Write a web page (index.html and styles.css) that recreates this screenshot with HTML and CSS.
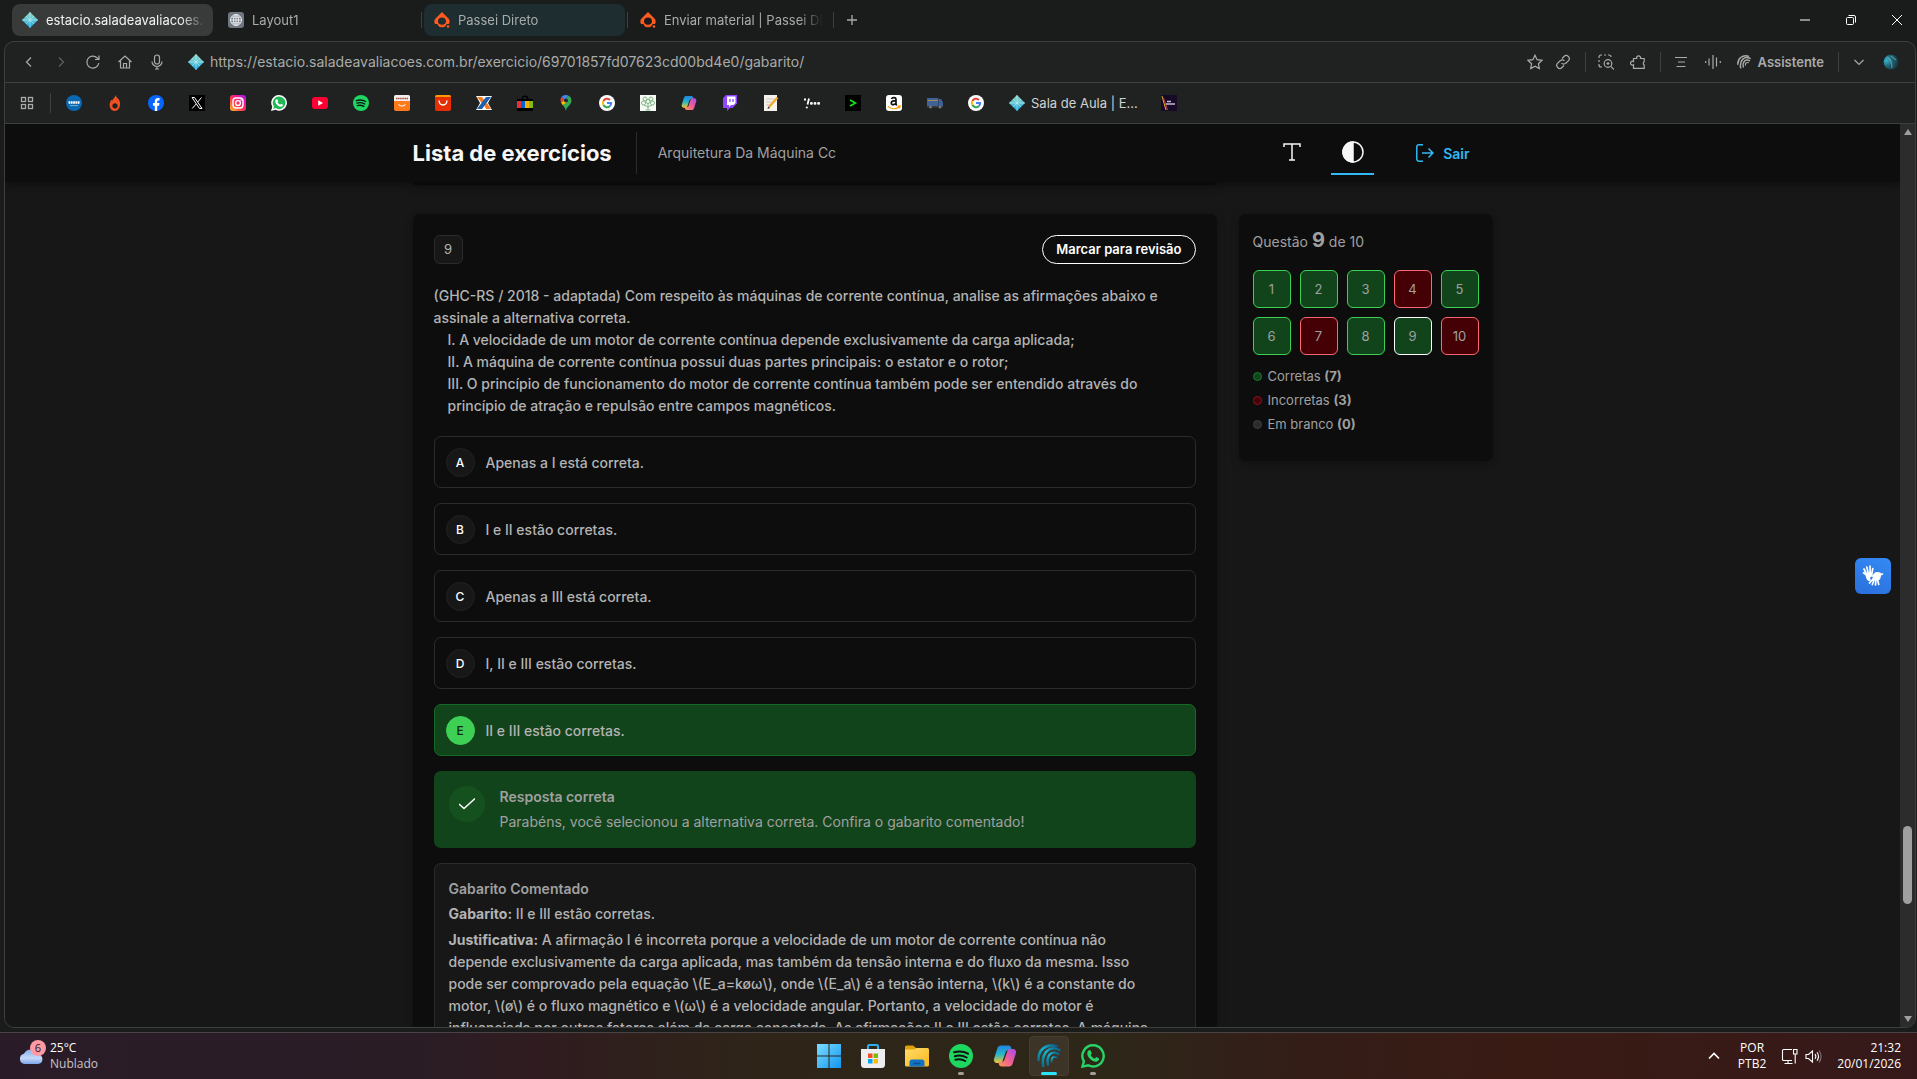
FILE: index.html
```html
<!DOCTYPE html>
<html lang="pt-BR">
<head>
    <meta charset="UTF-8">
    <meta name="viewport" content="width=device-width, initial-scale=1.0">
    <title>Lista de exercícios</title>
    <link rel="stylesheet" href="styles.css">
</head>
<body>
    <!-- Shared icons -->
    <svg class="sprite" aria-hidden="true">
        <defs>
            <linearGradient id="gem" x1="0" y1="0" x2="0" y2="1"><stop offset="0" stop-color="#8fd3c8"/><stop offset=".5" stop-color="#5cc3d0"/><stop offset="1" stop-color="#12a5e8"/></linearGradient>
            <linearGradient id="insta" x1="0" y1="1" x2="1" y2="0"><stop offset="0" stop-color="#ffc328"/><stop offset=".4" stop-color="#ff3d4d"/><stop offset=".7" stop-color="#f0179b"/><stop offset="1" stop-color="#8a1fff"/></linearGradient>
            <linearGradient id="cop1" x1="0" y1="0" x2="0" y2="1"><stop offset="0" stop-color="#2383e2"/><stop offset=".5" stop-color="#25b6c9"/><stop offset="1" stop-color="#f5c52c"/></linearGradient>
            <linearGradient id="cop2" x1="0" y1="1" x2="1" y2="0"><stop offset="0" stop-color="#a34bea"/><stop offset=".5" stop-color="#ef5c9b"/><stop offset="1" stop-color="#fb9a4b"/></linearGradient>
            <linearGradient id="win" x1="0" y1="0" x2="1" y2="1"><stop offset="0" stop-color="#7bdcff"/><stop offset="1" stop-color="#1296f0"/></linearGradient>
            <linearGradient id="wave" x1="1" y1="0" x2="0" y2="1"><stop offset="0" stop-color="#0d5a80"/><stop offset=".5" stop-color="#16b3cf"/><stop offset="1" stop-color="#0e6f8c"/></linearGradient>
            <linearGradient id="cloud" x1="0" y1="0" x2="0" y2="1"><stop offset="0" stop-color="#86aef0"/><stop offset=".6" stop-color="#c6dafa"/><stop offset="1" stop-color="#7ba5ec"/></linearGradient>
            <linearGradient id="folder" x1="0" y1="0" x2="1" y2="1"><stop offset="0" stop-color="#ffdb6b"/><stop offset="1" stop-color="#fbb81c"/></linearGradient>
            <radialGradient id="orb" cx=".2" cy=".4" r=".9"><stop offset="0" stop-color="#39b4cf"/><stop offset=".45" stop-color="#1f5f70"/><stop offset="1" stop-color="#123039"/></radialGradient>
        </defs>
        <symbol id="i-gem" viewBox="0 0 16 16">
            <path fill="url(#gem)" d="M8 0l8 8-8 8-8-8z"/>
            <path d="M8 0v16M0 8h16M4 4l8 8M12 4l-8 8" stroke="#dff8ff" stroke-width=".6" opacity=".8"/>
        </symbol>
        <symbol id="i-passei" viewBox="0 0 16 16">
            <path fill="#ff5a1f" fill-rule="evenodd" d="M8 0l6.500 6.500c1.500 1.700 1.500 3.500.5 5.500h-3.600l-1 1.800H5.600l-1-1.800H1C0 10 0 8.200 1.500 6.500zM8 5.600a4 4 0 0 0-4 3.900c0 2 1.800 3.300 4 3.300s4-1.300 4-3.300a4 4 0 0 0-4-3.900z"/>
            <path d="M4 12.200c1.500 3 6.500 3 8 0" fill="none" stroke="#ff5a1f" stroke-width="1.600"/>
            <circle cx="14" cy="14.500" r="1.300" fill="#ff5a1f"/>
        </symbol>
        <symbol id="i-google" viewBox="0 0 16 16">
            <circle cx="8" cy="8" r="8" fill="#fff"/>
            <g fill="none" stroke-width="2">
                <path stroke="#ea4335" d="M4.400 5.900A4.200 4.200 0 0 1 11 5"/>
                <path stroke="#fbbc05" d="M4.400 10.100a4.200 4.200 0 0 1 0-4.200"/>
                <path stroke="#34a853" d="M10.800 11.200a4.200 4.200 0 0 1-6.400-1.100"/>
                <path stroke="#4285f4" d="M8 8.100h4.200a4.200 4.200 0 0 1-1.400 3.100"/>
            </g>
        </symbol>
        <symbol id="i-spotify" viewBox="0 0 24 24">
            <circle cx="12" cy="12" r="12" fill="#1ed760"/>
            <path d="M5 8.300c5-1.400 10-.9 14 1.400M5.800 12.200c4.200-1.200 8.400-.7 11.900 1.300M6.400 15.800c3.600-.9 6.900-.5 9.900 1.200" fill="none" stroke="#121212" stroke-width="2" stroke-linecap="round"/>
        </symbol>
        <symbol id="i-copilot" viewBox="0 0 24 24">
            <path id="cop-half" fill="url(#cop1)" d="M8 1.500h7.500c1.400 0 2.200.9 2.600 2.200l.7 2.300h-3.300c-1.600 0-2.500.9-3 2.400l-2.700 8c-.5 1.500-1.400 2.600-2.800 2.600H4.200C1.800 19 .4 17 1.100 14.700l3.300-10.500C5 2.400 6.200 1.500 8 1.500z"/>
            <path fill="url(#cop2)" transform="rotate(180 12 12)" d="M8 1.500h7.500c1.400 0 2.200.9 2.600 2.200l.7 2.300h-3.300c-1.600 0-2.500.9-3 2.400l-2.700 8c-.5 1.500-1.400 2.600-2.800 2.600H4.200C1.800 19 .4 17 1.100 14.700l3.300-10.500C5 2.400 6.200 1.500 8 1.500z"/>
        </symbol>
        <symbol id="i-arcs" viewBox="0 0 24 24">
            <g fill="none" stroke-linecap="round">
                <path stroke-width="2.600" d="M19.500 2C9-.5 1 6 1.500 16"/>
                <path stroke-width="2.600" d="M22.500 5.800C13 1 4 8.500 6.200 22"/>
                <path stroke-width="2.400" d="M21.500 9.800C15 6 9 11 10.800 20.500"/>
                <path stroke-width="2" d="M19.500 13.300c-3.500-1.500-5.500 1-5 4.200"/>
            </g>
        </symbol>
    </svg>

    <header class="tab-strip">
        <div class="tabs">
            <button class="tab tab-active" type="button">
                <svg class="icon-16"><use href="#i-gem"/></svg>
                <span class="tab-title">estacio.saladeavaliacoes.com.br</span>
            </button>
            <button class="tab" type="button">
                <svg class="icon-16" viewBox="0 0 16 16"><rect width="16" height="16" rx="3" fill="#6f7780"/><g fill="none" stroke="#e9edf0" stroke-width="1"><circle cx="8" cy="8" r="5.500"/><ellipse cx="8" cy="8" rx="2.500" ry="5.500"/><path d="M8 2.500v11M2.500 8h11M3.500 5.200h9M3.500 10.800h9"/></g></svg>
                <span class="tab-title">Layout1</span>
            </button>
            <button class="tab tab-tinted" type="button">
                <svg class="icon-16"><use href="#i-passei"/></svg>
                <span class="tab-title">Passei Direto</span>
            </button>
            <button class="tab tab-last" type="button">
                <svg class="icon-16"><use href="#i-passei"/></svg>
                <span class="tab-title">Enviar material | Passei Direto</span>
            </button>
            <button class="new-tab" type="button" aria-label="Nova guia">
                <svg class="icon-16" viewBox="0 0 16 16"><path d="M8 3v10M3 8h10" stroke="#a9abaa" stroke-width="1.300"/></svg>
            </button>
        </div>
        <div class="window-controls">
            <button type="button" aria-label="Minimizar"><svg viewBox="0 0 10 10"><path d="M0 5h10"/></svg></button>
            <button type="button" aria-label="Restaurar"><svg viewBox="0 0 10 10"><rect x=".5" y="2.500" width="7" height="7" rx="1"/><path d="M2.500.5H8A1.500 1.500 0 0 1 9.500 2v5.500"/></svg></button>
            <button type="button" aria-label="Fechar"><svg viewBox="0 0 10 10"><path d="M0 0l10 10M10 0L0 10"/></svg></button>
        </div>
    </header>

    <div class="window">
        <div class="address-bar">
            <nav class="nav-buttons">
                <button type="button" aria-label="Voltar"><svg viewBox="0 0 16 16"><path d="M10 3.500L5.500 8l4.500 4.500"/></svg></button>
                <button class="is-off" type="button" aria-label="Avançar"><svg viewBox="0 0 16 16"><path d="M6 3.500L10.500 8 6 12.500"/></svg></button>
                <button type="button" aria-label="Recarregar"><svg viewBox="0 0 16 16"><path d="M13.800 9A6 6 0 1 1 12 3.800L14 5.500M14 1.500v4h-4"/></svg></button>
                <button type="button" aria-label="Início"><svg viewBox="0 0 16 16"><path d="M1.500 8L8 2l6.500 6M3.500 6.500V14h9V6.500M6.500 14V9.500h3V14"/></svg></button>
                <button type="button" aria-label="Voz"><svg viewBox="0 0 16 16"><rect x="5.500" y="1" width="5" height="9" rx="2.500"/><path d="M3 7.500a5 5 0 0 0 10 0M8 12.500V15M6 15h4"/></svg></button>
            </nav>
            <svg class="icon-16 site-icon"><use href="#i-gem"/></svg>
            <input class="url" type="text" aria-label="Endereço" value="https://estacio.saladeavaliacoes.com.br/exercicio/69701857fd07623cd00bd4e0/gabarito/">
            <div class="tools">
                <button type="button" aria-label="Favoritar"><svg viewBox="0 0 16 16"><path d="M8 1.200l2.100 4.500 4.900.6-3.600 3.400.9 4.900L8 12.200l-4.300 2.400.9-4.900L1 6.300l4.900-.6z"/></svg></button>
                <button type="button" aria-label="Copiar link"><svg viewBox="0 0 16 16"><path d="M7 4.500l2-2a3 3 0 0 1 4.300 4.300l-2.500 2.400a3 3 0 0 1-4.300 0M9 11.500l-2 2a3 3 0 0 1-4.300-4.300l2.500-2.400a3 3 0 0 1 4.300 0"/></svg></button>
            </div>
            <div class="tools tools-wide">
                <button type="button" aria-label="Busca visual"><svg viewBox="0 0 16 16"><path d="M1 4V3a2 2 0 0 1 2-2h1M6 1h2M10 1h1a2 2 0 0 1 2 2M1 6v2M1 10v1a2 2 0 0 0 2 2h1"/><circle cx="10" cy="9.500" r="3.800"/><path d="M12.800 12.300L16 15.500M10 8v3M8.500 9.500h3"/></svg></button>
                <button type="button" aria-label="Extensões"><svg viewBox="0 0 16 16"><path d="M3.500 14.300V10.800a1.900 1.900 0 1 1 0-3.200V4.500h3.200a2 2 0 1 1 3.800 0h3.700v3.200a2 2 0 0 0 0 3.400v3.200z"/></svg></button>
            </div>
            <div class="tools tools-wide">
                <button type="button" aria-label="Leitura"><svg viewBox="0 0 16 16"><path d="M2 3.500h12M5 8h7M3.500 12.500h9"/></svg></button>
                <button type="button" aria-label="Ouvir"><svg viewBox="0 0 16 16"><path d="M.7 7v2M4 4.500v7M8 1v14M11.500 3.500v9M15.300 7v2"/></svg></button>
                <button class="assistant" type="button"><svg viewBox="0 0 24 24"><use href="#i-arcs"/></svg>Assistente</button>
            </div>
            <div class="tools tools-wide">
                <button type="button" aria-label="Mais"><svg viewBox="0 0 16 16"><path d="M3.500 6L8 10.500 12.500 6"/></svg></button>
                <button type="button" aria-label="Perfil"><svg viewBox="0 0 16 16"><circle cx="8" cy="8" r="7.500" fill="url(#orb)" stroke="none"/><path d="M4 3c4 2 5 5 5 11M8 2l5 4" stroke="#8ec9d5" opacity=".5"/></svg></button>
            </div>
        </div>

        <nav class="bookmarks">
            <button class="apps" type="button" aria-label="Aplicativos"><svg class="icon-16" viewBox="0 0 16 16"><g fill="none" stroke="#a9abaa" stroke-width="1.300"><rect x="2.500" y="2.500" width="4" height="4"/><rect x="9.500" y="2.500" width="4" height="4"/><rect x="2.500" y="9.500" width="4" height="4"/><rect x="9.500" y="9.500" width="4" height="4"/></g></svg></button>
            <a href="#" aria-label="SENAI"><svg viewBox="0 0 16 16"><circle cx="8" cy="8" r="8" fill="#0a67b1"/><path d="M2.500 7.500h11" stroke="#fff" stroke-width="2.400" stroke-dasharray="1.800 .5"/><path d="M4 10.600h8" stroke="#8fc1e6" stroke-width=".8"/></svg></a>
            <a href="#" aria-label="Hotmart"><svg viewBox="0 0 16 16"><path fill="#f04e23" fill-rule="evenodd" d="M8.500 0c.3 2 3 3.200 4 5.700 1.800 4.600-.5 10.300-4.700 10.300S1.500 11 3.200 7l1-2.200 1 1C5.600 4 8 3 8.500 0zM8 8.200a2.600 2.600 0 1 0 0 5.200 2.600 2.600 0 0 0 0-5.200z"/></svg></a>
            <a href="#" aria-label="Facebook"><svg viewBox="0 0 16 16"><circle cx="8" cy="8" r="8" fill="#0866ff"/><path fill="#fff" d="M6.800 16v-5.300H5V8h1.800V6.700C6.800 4.300 8 3 10.200 3l1.300.1v2.300h-1c-1 0-1.300.5-1.300 1.300V8h2.300l-.4 2.700H9.200V16z"/></svg></a>
            <a href="#" aria-label="X"><svg viewBox="0 0 16 16"><path d="M0 0h16v16H0z"/><path fill="none" stroke="#fff" d="M3 2.500h2.500l7.500 11h-2.500zM12.500 2.500L8.700 7M7.200 9l-4 4.500"/></svg></a>
            <a href="#" aria-label="Instagram"><svg viewBox="0 0 16 16"><rect width="16" height="16" rx="3" fill="url(#insta)"/><g fill="none" stroke="#fff" stroke-width="1.400"><rect x="3" y="3" width="10" height="10" rx="3"/><circle cx="8" cy="8" r="2.400"/></g><circle cx="11" cy="5" r=".8" fill="#fff"/></svg></a>
            <a href="#" aria-label="WhatsApp"><svg viewBox="0 0 16 16"><path fill="#fff" d="M8.200 0A7.800 7.800 0 1 1 4.500 14.700L0 16l1.300-4.300A7.800 7.800 0 0 1 8.200 0z"/><path fill="#1fb855" d="M8.200 1.500a6.300 6.300 0 1 1-3.500 11.600L2.200 14l.8-2.500A6.300 6.300 0 0 1 8.200 1.500z"/><path fill="#fff" d="M5.300 4.300l1-.1.900 2-.7 1c.6 1.200 1.500 2 2.700 2.500l.9-1 1.900 1c0 1.300-1 2-2.100 2C7 11.500 4.300 8.500 4.300 6.200c0-.9.400-1.500 1-1.900z"/></svg></a>
            <a href="#" aria-label="YouTube"><svg viewBox="0 0 16 16"><rect y="2" width="16" height="12" rx="3" fill="#ff0033"/><path fill="#fff" d="M6.200 5.300L11 8l-4.800 2.700z"/></svg></a>
            <a href="#" aria-label="Spotify"><svg><use href="#i-spotify"/></svg></a>
            <a href="#" aria-label="Ofertas"><svg viewBox="0 0 16 16"><rect width="16" height="16" rx="2" fill="#ff7a1a"/><path fill="#f4efec" d="M2 0h12a2 2 0 0 1 2 2v4H0V2a2 2 0 0 1 2-2z"/><path d="M2 3.500h12" stroke="#a04a3c" stroke-width="1.600" stroke-dasharray="1.500 .6"/><path d="M4.500 9.500c1.500 2 5.500 2 7 0" fill="none" stroke="#fff" stroke-width="1.200"/></svg></a>
            <a href="#" aria-label="AliExpress"><svg viewBox="0 0 16 16"><rect width="16" height="16" rx="2" fill="#e62e04"/><path fill="#ff9a00" d="M2 0h12a2 2 0 0 1 2 2H0a2 2 0 0 1 2-2z"/><path d="M4 5.500c.5 6 7.500 6 8 0" fill="none" stroke="#fff" stroke-width="1.400"/></svg></a>
            <a href="#" aria-label="Exatas"><svg viewBox="0 0 16 16"><path fill="#fff" d="M0 1h16l-4 7 4 7H0l4-7z"/><path fill="#f47b20" d="M1 2h5l3 4-2.500 3zM8 10l3-2 4 6h-5z"/><path fill="#1d5fa8" d="M10 2h5L6 14H1z"/></svg></a>
            <a href="#" aria-label="Loja"><svg viewBox="0 0 16 16"><path d="M5 5c0-5 6-5 6 0" fill="none" stroke="#000" stroke-width="1.400"/><path d="M0 4h16v12H0z"/><path fill="#e53238" d="M0 6h4v7H0z"/><path fill="#0064d2" d="M4 6h4v7H4z"/><path fill="#f5af02" d="M8 6h4v7H8z"/><path fill="#86b817" d="M12 6h4v7h-4z"/></svg></a>
            <a href="#" aria-label="Maps"><svg viewBox="0 0 16 16"><path fill="#34a853" d="M8 16c0-4 5.500-6 5.500-10.500C13.500 3 12 1 10 .4L4 9c1.500 2.500 3.500 4 4 7z"/><path fill="#4285f4" d="M10 .4C7 -.6 4.500.500 3.500 2L7 5z"/><path fill="#ea4335" d="M3.500 2C2.300 3.600 2.300 5.500 3 7.500L7 5z"/><path fill="#fbbc05" d="M3 7.500L4.500 10 9.500 7 7 5z"/><circle cx="8" cy="5.500" r="2" fill="#1c2a3a"/></svg></a>
            <a href="#" aria-label="Google"><svg><use href="#i-google"/></svg></a>
            <a href="#" aria-label="Árvore"><svg viewBox="0 0 16 16"><path fill="#f6faf5" d="M0 0h16v16H0z"/><g fill="none" stroke="#7fb683"><circle cx="5" cy="4" r="2"/><circle cx="11" cy="4" r="2"/><circle cx="3.500" cy="8" r="2"/><circle cx="8" cy="6.500" r="2"/><circle cx="12.500" cy="8" r="2"/><path d="M8 8v7M8 12L4 10M8 12l4-2M5.500 15h5"/></g></svg></a>
            <a href="#" aria-label="Copilot"><svg><use href="#i-copilot"/></svg></a>
            <a href="#" aria-label="Twitch"><svg viewBox="0 0 16 16"><path fill="#9146ff" d="M4 0L1 3v10h4v3l3-3h2.500L15 8.500V0z"/><path fill="#fff" d="M5 1.500h8.500V8l-2 2H9l-2 2v-2H5z"/><path d="M8 4v3M11 4v3" stroke="#9146ff" stroke-width="1.300"/></svg></a>
            <a href="#" aria-label="Notas"><svg viewBox="0 0 16 16"><path fill="#f4f2ea" d="M1 0h13v16H1z"/><path d="M3 4h8M3 7h6M3 10h4" stroke="#c9c7bf"/><path d="M14.500 2.500L6 12" stroke="#f0a830" stroke-width="2.400"/><path fill="#333" d="M4.500 14l.6-2.600 1.900 1.700z"/></svg></a>
            <a href="#" aria-label="Código"><svg viewBox="0 0 16 16"><path d="M0 4.500h2M5 3.500L3.500 9.500" fill="none" stroke="#fff" stroke-width="1.800"/><g fill="#f4f4f4"><circle cx="2.800" cy="12.500" r="1.100"/><rect x="6" y="7" width="2.800" height="2.800" rx="1"/><rect x="9.600" y="7" width="2.800" height="2.800" rx="1"/><rect x="13.200" y="7" width="2.800" height="2.800" rx="1"/></g></svg></a>
            <a href="#" aria-label="Terminal"><svg viewBox="0 0 16 16"><path d="M0 0h16v16H0z"/><path d="M5 5l5.500 3L5 11" fill="none" stroke="#12e312" stroke-width="1.600"/></svg></a>
            <a href="#" aria-label="Amazon"><svg viewBox="0 0 16 16"><rect width="16" height="16" rx="3" fill="#fff"/><path d="M5.500 4c.7-2 4.500-2 4.500.5V9c0 .6.300 1 .8 1.400M10 5.700C7 5.700 5.300 6.300 5.300 8c0 2.400 3.800 2.200 4.700-.3" fill="none" stroke="#111" stroke-width="1.700"/><path d="M2 11.500c3.500 2.700 8 2.700 11 .6M11.500 11.200l2.500-.2-.6 2.400" fill="none" stroke="#ff9900" stroke-width="1.300"/></svg></a>
            <a href="#" aria-label="Caminhão"><svg viewBox="0 0 16 16"><path fill="#3f6298" d="M0 3h11.500v8H0zM12 4h2l2 3.500V11h-4z"/><path fill="#3a3a3e" d="M0 11h16v1.500H0z"/><path d="M1 5.500h10" stroke="#a58a58"/><circle cx="3.500" cy="12" r="1.500" fill="#73737a"/><circle cx="13" cy="12" r="1.500" fill="#73737a"/></svg></a>
            <a href="#" aria-label="Google"><svg><use href="#i-google"/></svg></a>
            <a class="bookmark-wide" href="#"><svg><use href="#i-gem"/></svg>Sala de Aula | E...</a>
            <a href="#" aria-label="Prisma"><svg viewBox="0 0 16 16"><path fill="#170a26" d="M0 0h16v16H0z"/><path d="M1 1l4 14" stroke="#e5b32c"/><path d="M2.500 3l4 12" stroke="#d03a4a"/><path d="M6 6.500h4M5 9h9" stroke="#c8b8d8" stroke-width="1.300"/></svg></a>
        </nav>

        <div class="viewport">
            <div class="page">
                <header class="page-header">
                    <div class="container header-row">
                        <h1>Lista de exercícios</h1>
                        <p class="subject">Arquitetura Da Máquina Cc</p>
                        <div class="header-actions">
                            <button type="button" aria-label="Tamanho do texto"><svg viewBox="0 0 20 20"><path d="M2 5V2h16v3M10 2v16M7 18h6"/></svg></button>
                            <button class="is-on" type="button" aria-label="Contraste"><svg viewBox="0 0 22 22"><circle cx="11" cy="11" r="10"/><path class="half" d="M11 1a10 10 0 0 0 0 20z"/></svg></button>
                            <a class="exit" href="#"><svg viewBox="0 0 18 18"><path d="M7 .8H3A2.200 2.200 0 0 0 .8 3v12A2.200 2.200 0 0 0 3 17.200h4M6 9h11M12.500 4.500L17 9l-4.500 4.500"/></svg>Sair</a>
                        </div>
                    </div>
                </header>

                <div class="container layout">
                    <main class="questions">
                        <section class="card card-previous"></section>
                        <section class="card question">
                            <div class="question-top">
                                <span class="badge">9</span>
                                <button class="review" type="button">Marcar para revisão</button>
                            </div>
                            <div class="statement">
                                <p>(GHC-RS / 2018 - adaptada) Com respeito às máquinas de corrente contínua, analise as afirmações abaixo e assinale a alternativa correta.</p>
                                <p class="indent">I. A velocidade de um motor de corrente contínua depende exclusivamente da carga aplicada;</p>
                                <p class="indent">II. A máquina de corrente contínua possui duas partes principais: o estator e o rotor;</p>
                                <p class="indent">III. O princípio de funcionamento do motor de corrente contínua também pode ser entendido através do princípio de atração e repulsão entre campos magnéticos.</p>
                            </div>
                            <div class="options">
                                <label class="option"><input type="radio" name="q9"><span class="letter">A</span>Apenas a I está correta.</label>
                                <label class="option"><input type="radio" name="q9"><span class="letter">B</span>I e II estão corretas.</label>
                                <label class="option"><input type="radio" name="q9"><span class="letter">C</span>Apenas a III está correta.</label>
                                <label class="option"><input type="radio" name="q9"><span class="letter">D</span>I, II e III estão corretas.</label>
                                <label class="option option-correct"><input type="radio" name="q9" checked><span class="letter">E</span>II e III estão corretas.</label>
                            </div>
                            <div class="feedback">
                                <span class="feedback-icon"><svg viewBox="0 0 16 16"><path d="M0 8l5 4.500L16 2.500"/></svg></span>
                                <div>
                                    <h2>Resposta correta</h2>
                                    <p>Parabéns, você selecionou a alternativa correta. Confira o gabarito comentado!</p>
                                </div>
                            </div>
                            <div class="answer-key">
                                <h2>Gabarito Comentado</h2>
                                <p><strong>Gabarito:</strong> II e III estão corretas.</p>
                                <p><strong>Justificativa:</strong> A afirmação I é incorreta porque a velocidade de um motor de corrente contínua não depende exclusivamente da carga aplicada, mas também da tensão interna e do fluxo da mesma. Isso pode ser comprovado pela equação \(E_a=køω\), onde \(E_a\) é a tensão interna, \(k\) é a constante do motor, \(ø\) é o fluxo magnético e \(ω\) é a velocidade angular. Portanto, a velocidade do motor é influenciada por outros fatores além da carga conectada. As afirmações II e III estão corretas. A máquina</p>
                            </div>
                        </section>
                    </main>

                    <aside class="card summary">
                        <p class="progress">Questão <strong>9</strong> de 10</p>
                        <div class="numbers">
                            <button class="hit" type="button">1</button>
                            <button class="hit" type="button">2</button>
                            <button class="hit" type="button">3</button>
                            <button class="miss" type="button">4</button>
                            <button class="hit" type="button">5</button>
                            <button class="hit" type="button">6</button>
                            <button class="miss" type="button">7</button>
                            <button class="hit" type="button">8</button>
                            <button class="hit current" type="button">9</button>
                            <button class="miss" type="button">10</button>
                        </div>
                        <ul class="legend">
                            <li class="legend-hit">Corretas <strong>(7)</strong></li>
                            <li class="legend-miss">Incorretas <strong>(3)</strong></li>
                            <li>Em branco <strong>(0)</strong></li>
                        </ul>
                    </aside>
                </div>

                <button class="sign-widget" type="button" aria-label="Libras">
                    <svg viewBox="0 0 22 22"><g fill="none" stroke="#fff" stroke-linecap="round"><path stroke-width="1.700" d="M4.500 9L2 4M6.200 8L4.800 2.200M8.200 8L8 1.200M9.800 9l1-5.500M4.500 10L1.500 7.800M14 14l-.5 6M12.500 14l-2.200 5.500M15.500 14l1.200 5.500M11.500 13.500L7.500 18M17 10l3.500-1"/></g><path fill="#fff" d="M3.500 8.500l4-1.500 3 1.500-.8 2.500L8 13l1 2.500-1.800.6C4.500 15.500 3.500 12 3.500 8.500zM9 11.500l4-4c2.500-1 6-.5 6.500 2l-1.500 5-3.500 1-4.500-1 1-2.500z"/></svg>
                </button>
            </div>
            <div class="scrollbar" aria-hidden="true">
                <svg viewBox="0 0 10 8"><path d="M5 1l4 6H1z"/></svg>
                <div class="track"><div class="thumb"></div></div>
                <svg viewBox="0 0 10 8"><path d="M5 7l4-6H1z"/></svg>
            </div>
        </div>
    </div>

    <footer class="taskbar">
        <button class="weather" type="button">
            <span class="weather-icon">
                <svg viewBox="0 0 24 16"><path fill="url(#cloud)" d="M5.500 16a5.200 5.200 0 0 1-.6-10.200A8 8 0 0 1 19.500 6.500 4.800 4.800 0 0 1 19 16z"/></svg>
                <span class="weather-badge">6</span>
            </span>
            <span class="weather-text">25°C<small>Nublado</small></span>
        </button>
        <div class="dock">
            <button type="button" aria-label="Iniciar"><svg viewBox="0 0 24 24"><path fill="url(#win)" d="M0 0h11.500v11.500H0zM12.500 0H24v11.500H12.500zM0 12.500h11.500V24H0zM12.500 12.500H24V24H12.500z"/></svg></button>
            <button type="button" aria-label="Microsoft Store"><svg viewBox="0 0 24 24"><path d="M7 6V2.200Q7 1 8.200 1h7.600Q17 1 17 2.200V6" fill="none" stroke="#2cb0f0" stroke-width="2"/><path fill="#eeeef0" d="M0 5h24v15.500a3.500 3.500 0 0 1-3.500 3.500h-17A3.500 3.500 0 0 1 0 20.500z"/><path fill="#f25022" d="M7 9.500h4.500V14H7z"/><path fill="#7fba00" d="M12.500 9.500H17V14h-4.500z"/><path fill="#00a4ef" d="M7 15h4.500v4.500H7z"/><path fill="#ffb900" d="M12.500 15H17v4.500h-4.500z"/></svg></button>
            <button type="button" aria-label="Explorador"><svg viewBox="0 0 24 24"><path fill="#e0a008" d="M0 3q0-1.500 1.500-1.500H8L11 4v3H0z"/><path fill="url(#folder)" d="M0 5.500h9L11.500 4H22.500Q24 4 24 5.500V21q0 1.500-1.500 1.500h-21Q0 22.500 0 21z"/><path fill="#1273c4" d="M4.500 18q0-2.500 2.500-2.500h10q2.500 0 2.500 2.500v4.500h-15z"/><path d="M8.500 19.500h7" stroke="#0b4f8c" stroke-width="1.500"/></svg></button>
            <button class="running" type="button" aria-label="Spotify"><svg><use href="#i-spotify"/></svg></button>
            <button type="button" aria-label="Copilot"><svg><use href="#i-copilot"/></svg></button>
            <button class="running focused" type="button" aria-label="Navegador"><svg class="arcs"><use href="#i-arcs"/></svg></button>
            <button class="running" type="button" aria-label="WhatsApp"><svg viewBox="0 0 24 24"><path fill="none" stroke="#25d366" stroke-width="2.400" d="M12.200 1.300a10.600 10.600 0 1 1-5 20L1.500 22.600l1.400-5.300A10.600 10.600 0 0 1 12.200 1.300z"/><path fill="#25d366" d="M7.800 6.300l1.700-.1 1.300 3.200-1.100 1.500c.9 1.800 2.300 3 4 3.800l1.500-1.600 3 1.500c0 2-1.600 3.100-3.300 3.100-4.500-.3-8.600-4.800-8.600-8.300 0-1.400.6-2.400 1.500-3.100z"/></svg></button>
        </div>
        <div class="tray">
            <button type="button" aria-label="Ícones ocultos"><svg viewBox="0 0 12 12"><path d="M1 8.500l5-5 5 5"/></svg></button>
            <button class="tray-lang" type="button">POR<br>PTB2</button>
            <button class="tray-status" type="button" aria-label="Rede e volume">
                <svg viewBox="0 0 17 17"><path d="M11 1.500H2.500q-1 0-1 1v9q0 1 1 1H11M7 12.500v3M3.500 15.500h8M12.500 1.500h3.500V6h-3.500zM14.200 6v9.500"/></svg>
                <svg viewBox="0 0 17 17"><path d="M1 6.500v4h2.500L7.500 14V3L3.500 6.500zM10 6.200q1.700 2.300 0 4.600M12 4.300q3 4.200 0 8.400"/><path opacity=".4" d="M14 2.500q4.200 6 0 12"/></svg>
            </button>
            <button class="tray-clock" type="button">21:32<br>20/01/2026</button>
        </div>
    </footer>
</body>
</html>
```

FILE: styles.css
```css
:root {
    --chrome: #202221;
    --chrome-dark: #1a1c1b;
    --chrome-line: #3d3f3e;
    --chrome-text: #a9abaa;
    --page: #171717;
    --card: #0d0d0d;
    --line: #2b2b2b;
    --text: #b3b3b3;
    --text-soft: #a0a0a0;
    --blue: #32b8f5;
    --green-bg: #12441b;
    --green: #3ed055;
    --radius: 7px;
}

* {
    box-sizing: border-box;
    margin: 0;
    padding: 0;
}

body {
    display: flex;
    flex-direction: column;
    height: 100vh;
    overflow: hidden;
    background: var(--chrome-dark);
    color: var(--text);
    font-family: 'Inter', sans-serif;
    font-size: 14px;
}

button,
input {
    border: 0;
    background: none;
    color: inherit;
    font: inherit;
}

a {
    color: inherit;
    text-decoration: none;
}

svg {
    display: block;
    flex: none;
}

.sprite {
    position: absolute;
    width: 0;
    height: 0;
}

.icon-16 {
    width: 16px;
    height: 16px;
}

/* Tabs */
.tab-strip {
    display: flex;
    justify-content: space-between;
    flex: none;
    height: 41px;
    padding: 0 0 1px 12px;
}

.tabs {
    display: flex;
    align-items: center;
    gap: 5px;
}

.tab {
    position: relative;
    display: flex;
    align-items: center;
    gap: 8px;
    width: 201px;
    height: 32px;
    padding: 0 8px 0 10px;
    border-radius: 8px;
    color: var(--chrome-text);
    font-size: 13px;
}

.tab-active {
    background: #393b3b;
    color: #f2f2f2;
}

.tab-tinted {
    background: #1d2d30;
}

.tab-title {
    flex: 1;
    overflow: hidden;
    text-align: left;
    white-space: nowrap;
    -webkit-mask-image: linear-gradient(to right, #000 85%, transparent);
    mask-image: linear-gradient(to right, #000 85%, transparent);
}

.tab:nth-child(n+2)::after {
    content: "";
    position: absolute;
    top: 8px;
    right: -3px;
    width: 1px;
    height: 16px;
    background: var(--chrome-line);
}

.new-tab {
    padding: 8px;
}

.window-controls {
    display: flex;
}

.window-controls button {
    display: flex;
    align-items: center;
    justify-content: center;
    width: 46px;
    padding-left: 5px;
}

.window-controls svg {
    width: 10px;
    height: 10px;
    overflow: visible;
    fill: none;
    stroke: #fff;
}

/* Browser window */
.window {
    display: flex;
    flex: 1;
    flex-direction: column;
    min-height: 0;
    margin: 0 1px 4px 4px;
    overflow: hidden;
    border: 1px solid var(--chrome-line);
    border-radius: 10px;
    background: var(--chrome);
}

.address-bar,
.bookmarks {
    display: flex;
    align-items: center;
    flex: none;
    height: 41px;
    border-bottom: 1px solid var(--chrome-line);
    color: var(--chrome-text);
}

.address-bar {
    padding: 0 16px 1px;
}

.nav-buttons,
.tools {
    display: flex;
    align-items: center;
    gap: 16px;
}

.nav-buttons svg,
.tools svg {
    width: 16px;
    height: 16px;
    fill: none;
    stroke: var(--chrome-text);
    stroke-width: 1.2;
}

.nav-buttons .is-off {
    opacity: .45;
}

.site-icon {
    margin: 0 6px 0 23px;
}

.url {
    flex: 1;
    outline: 0;
}

.tools {
    gap: 12px;
}

.tools-wide {
    gap: 16px;
    margin-left: 14px;
    padding-left: 12px;
    border-left: 1px solid var(--chrome-line);
    height: 20px;
}

.tools .assistant {
    display: flex;
    align-items: center;
    gap: 7px;
    font-size: 13px;
    font-weight: 600;
}

.tools .assistant svg {
    width: 14px;
    height: 14px;
}

.bookmarks {
    gap: 25px;
    padding-left: 14px;
    font-size: 13px;
}

.bookmarks svg {
    width: 16px;
    height: 16px;
}

.apps {
    height: 20px;
    padding-right: 15px;
    border-right: 1px solid var(--chrome-line);
}

.apps + a {
    margin-left: -10px;
}

.bookmark-wide {
    display: flex;
    align-items: center;
    gap: 6px;
    width: 127px;
    color: #d0d2d1;
    white-space: nowrap;
}

/* Page */
.viewport {
    display: flex;
    flex: 1;
    min-height: 0;
}

.page {
    position: relative;
    flex: 1;
    overflow: hidden;
    background: var(--page);
}

.container {
    width: 100%;
    max-width: 1080px;
    margin: 0 auto;
}

.page-header {
    position: relative;
    z-index: 1;
    background: var(--card);
    box-shadow: 0 2px 8px rgba(0, 0, 0, .4);
}

.header-row {
    display: flex;
    align-items: center;
    height: 58px;
}

.header-row h1 {
    color: #f7f7f7;
    font-size: 22px;
    font-weight: 700;
    line-height: 42px;
}

.subject {
    margin-left: 24px;
    padding-left: 21px;
    border-left: 1px solid var(--line);
    color: var(--text-soft);
    line-height: 42px;
}

.header-actions {
    display: flex;
    align-items: center;
    margin-left: auto;
    padding-right: 23px;
}

.header-actions button {
    display: flex;
    align-items: center;
    justify-content: center;
    width: 43px;
    height: 44px;
    margin-right: 18px;
    border-bottom: 2px solid transparent;
}

.header-actions button svg {
    width: 20px;
    height: 20px;
    fill: none;
    stroke: #f7f7f7;
    stroke-width: 1.5;
}

.header-actions .is-on {
    margin-right: 42px;
    border-color: var(--blue);
}

.header-actions .is-on svg {
    width: 22px;
    height: 22px;
}

.header-actions .half {
    fill: #f7f7f7;
}

.exit {
    display: flex;
    align-items: center;
    gap: 9px;
    color: var(--blue);
    font-weight: 600;
}

.exit svg {
    width: 18px;
    height: 18px;
    fill: none;
    stroke: currentColor;
    stroke-width: 1.5;
}

.layout {
    display: flex;
    align-items: flex-start;
    gap: 22px;
}

.questions {
    flex: 1;
    min-width: 0;
}

.card {
    border-radius: var(--radius);
    background: var(--card);
    box-shadow: 0 2px 8px rgba(0, 0, 0, .3);
}

.card-previous {
    height: 3px;
    margin-bottom: 29px;
    border-radius: 0 0 var(--radius) var(--radius);
}

.question {
    padding: 21px;
}

.question-top {
    display: flex;
    align-items: center;
    justify-content: space-between;
    margin-bottom: 21px;
}

.badge {
    width: 29px;
    border: 1px solid var(--line);
    border-radius: 6px;
    background: var(--page);
    font-size: 13px;
    line-height: 27px;
    text-align: center;
}

.review {
    height: 29px;
    padding: 0 13px 2px;
    border: 1px solid #fff;
    border-radius: 15px;
    color: #fff;
    font-size: 13px;
    font-weight: 600;
}

.statement {
    margin-bottom: 19px;
    font-weight: 500;
    line-height: 22px;
}

.indent {
    padding-left: 14px;
}

.options {
    display: flex;
    flex-direction: column;
    gap: 15px;
}

.option {
    display: flex;
    align-items: center;
    gap: 11px;
    height: 52px;
    padding: 0 11px;
    border: 1px solid var(--line);
    border-radius: var(--radius);
    font-weight: 500;
}

.option input {
    position: absolute;
    opacity: 0;
}

.letter {
    width: 29px;
    border: 1px solid #222;
    border-radius: 50%;
    background: var(--page);
    color: #fff;
    font-size: 12px;
    line-height: 27px;
    text-align: center;
}

.option-correct {
    border-color: #17692a;
    background: var(--green-bg);
}

.option-correct .letter {
    border-color: var(--green);
    background: var(--green);
    color: #0d2b13;
}

.feedback {
    display: flex;
    gap: 15px;
    margin-top: 15px;
    padding: 15px;
    border-radius: var(--radius);
    background: var(--green-bg);
    color: var(--text-soft);
    line-height: 22px;
}

.feedback h2,
.answer-key h2 {
    margin-bottom: 3px;
    color: var(--text-soft);
    font-size: 14px;
    font-weight: 600;
}

.feedback-icon {
    display: flex;
    align-items: center;
    justify-content: center;
    width: 36px;
    height: 36px;
    border-radius: 50%;
    background: #15511f;
}

.feedback-icon svg {
    width: 16px;
    height: 16px;
    fill: none;
    stroke: #fff;
    stroke-width: 1.5;
}

.answer-key {
    margin-top: 15px;
    padding: 14px 36px 14px 14px;
    border: 1px solid var(--line);
    border-radius: var(--radius);
    background: var(--page);
    font-weight: 500;
    line-height: 22px;
}

.answer-key p {
    margin-bottom: 4px;
}

.answer-key strong {
    font-weight: 700;
}

/* Summary */
.summary {
    width: 254px;
    min-height: 247px;
    margin-top: 32px;
    padding: 13px 14px;
    color: var(--text-soft);
}

.progress {
    margin-bottom: 15px;
    line-height: 27px;
}

.progress strong {
    font-size: 20px;
}

.numbers {
    display: flex;
    flex-wrap: wrap;
    gap: 9px;
}

.numbers button {
    width: 38px;
    height: 38px;
    border: 1px solid var(--green);
    border-radius: 6px;
    background: var(--green-bg);
    font-size: 13px;
}

.numbers .miss {
    border-color: #ff6673;
    background: #450005;
}

.numbers .current {
    border-color: #fff;
}

.legend {
    margin-top: 9px;
    list-style: none;
    font-size: 13px;
    line-height: 24px;
}

.legend li::before {
    content: "";
    display: inline-block;
    width: 7px;
    height: 7px;
    margin-right: 6px;
    border: 1px solid #3f3f3f;
    border-radius: 50%;
    background: #2b2b2b;
}

.legend .legend-hit::before {
    border-color: #1d7a30;
    background: var(--green-bg);
}

.legend .legend-miss::before {
    border-color: #8d1722;
    background: #450005;
}

.sign-widget {
    position: absolute;
    top: 434px;
    right: 9px;
    padding: 7px;
    border-radius: 6px;
    background: linear-gradient(200deg, #348af5, #2a6fdb);
}

.sign-widget svg {
    width: 22px;
    height: 22px;
}

.scrollbar {
    display: flex;
    flex-direction: column;
    align-items: center;
    justify-content: space-between;
    width: 15px;
    padding: 4px 0;
    background: #2c2c2c;
}

.scrollbar svg {
    width: 10px;
    height: 8px;
    fill: #9f9f9f;
}

.track {
    display: flex;
    flex: 1;
    flex-direction: column;
    justify-content: flex-end;
    padding-bottom: 111px;
}

.thumb {
    width: 9px;
    height: 78px;
    border-radius: 5px;
    background: #9f9f9f;
}

/* Taskbar */
.taskbar {
    display: grid;
    grid-template-columns: 1fr auto 1fr;
    flex: none;
    height: 47px;
    border-top: 1px solid #4a4345;
    background: linear-gradient(to right, #291c28, #2a1c25 22%, #301c20 28%, #2e2518 40%, #2d2718 58%, #331e18 66%, #3a1b14 80%, #35191a);
    color: #fff;
    font-family: 'Open Sans', 'Noto Sans', sans-serif;
    font-size: 12px;
    line-height: 16px;
}

.weather {
    display: flex;
    align-items: center;
    gap: 7px;
    padding-left: 19px;
    text-align: left;
}

.weather-icon {
    position: relative;
}

.weather-icon svg {
    width: 24px;
    height: 16px;
}

.weather-badge {
    position: absolute;
    top: -8px;
    right: -3px;
    width: 16px;
    border-radius: 50%;
    background: #ff99a4;
    color: #1a1a1a;
    font-size: 11px;
    text-align: center;
}

.weather-text small {
    display: block;
    color: #c9c3c8;
    font-size: 12px;
}

.dock {
    display: flex;
    align-items: center;
    gap: 4px;
    padding-left: 4px;
}

.dock button {
    position: relative;
    display: flex;
    align-items: center;
    justify-content: center;
    width: 40px;
    height: 40px;
    border: 1px solid transparent;
    border-radius: 4px;
}

.dock svg {
    width: 24px;
    height: 24px;
}

.dock .arcs {
    stroke: url(#wave);
}

.dock .focused {
    border-color: #463d2e;
    background: #3b3427;
}

.dock .running::after {
    content: "";
    position: absolute;
    bottom: 0;
    width: 6px;
    height: 3px;
    border-radius: 2px;
    background: #a39e98;
}

.dock .focused::after {
    width: 16px;
    background: #2ae4ff;
}

.tray {
    display: flex;
    align-items: center;
    justify-content: flex-end;
    padding-right: 16px;
}

.tray svg {
    width: 17px;
    height: 17px;
    fill: none;
    stroke: #fff;
    stroke-width: 1.1;
}

.tray button:first-child svg {
    width: 12px;
    height: 12px;
    stroke-width: 1.6;
}

.tray-lang {
    margin: 0 15px 0 18px;
}

.tray-status {
    display: flex;
    gap: 7px;
    margin-right: 15px;
}

.tray-clock {
    text-align: right;
}
```
